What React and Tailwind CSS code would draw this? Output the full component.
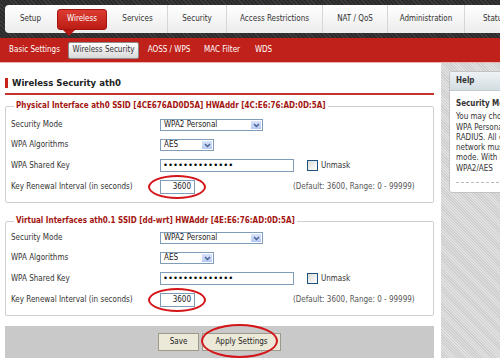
import React from "react";

const tabs = [
  { name: "Setup", w: "w-[51px]" },
  { name: "Wireless", w: "w-[52px]", active: true },
  { name: "Services", w: "w-[59px]" },
  { name: "Security", w: "w-[59px]", sep: true },
  { name: "Access Restrictions", w: "w-[96px]", sep: true },
  { name: "NAT / QoS", w: "w-[65px]", sep: true },
  { name: "Administration", w: "w-[77px]", sep: true },
  { name: "Status", w: "w-[60px]", sep: true },
];

const subTabs = [
  { name: "Basic Settings", w: "w-[59px]" },
  { name: "Wireless Security", w: "w-[71px]", active: true },
  { name: "AOSS / WPS", w: "w-[60px]" },
  { name: "MAC Filter", w: "w-[46px]" },
  { name: "WDS", w: "w-[37px]" },
];

const Chevron = () => (
  <svg width="7" height="5" viewBox="0 0 7 5">
    <path d="M1 1l2.5 2.5L6 1" fill="none" stroke="#4a5f8c" strokeWidth="1.4" />
  </svg>
);

const Select = ({ value, w }) => (
  <div className={`${w} h-[12px] border border-[#7f9db9] bg-white flex items-center`}>
    <span className="flex-1 pl-[3px] text-[#222] leading-none">{value}</span>
    <span className="w-[12px] h-full bg-gradient-to-b from-[#d8e4fc] to-[#b6c9f3] border border-white flex items-center justify-center">
      <Chevron />
    </span>
  </div>
);

const Row = ({ label, h = "h-[20px]", children }) => (
  <div className={`flex items-center ${h}`}>
    <div className="w-[149px] shrink-0 text-[#333] whitespace-nowrap">{label}</div>
    {children}
  </div>
);

const Circle = ({ pos }) => (
  <div className={`absolute ${pos} border-2 border-[#d4161a] rounded-[50%] pointer-events-none`} />
);

const Interface = ({ legend, mt, pt }) => (
  <fieldset className={`${mt} border border-[#cfcfcf] rounded-[2px] pl-[5px] pb-[4px]`}>
    <legend className="ml-[3px] px-[2px] leading-[10px] font-bold text-[#a3150f] whitespace-nowrap">{legend}</legend>
    <div className={pt}>
      <Row label="Security Mode">
        <Select value="WPA2 Personal" w="w-[103px]" />
      </Row>
      <Row label="WPA Algorithms">
        <Select value="AES" w="w-[54px]" />
      </Row>
      <Row label="WPA Shared Key" h="h-[21px]">
        <div className="w-[134px] h-[13px] border border-[#7f9db9] bg-white flex items-center pl-[2px] overflow-hidden">
          <span className="font-['DejaVu_Sans',sans-serif] text-[8.5px] leading-none text-black">••••••••••••••</span>
        </div>
        <div className="ml-[13px] w-[11px] h-[11px] border border-[#1c5180] bg-gradient-to-br from-[#dcdcd6] to-white" />
        <span className="ml-[3px] text-[#333]">Unmask</span>
      </Row>
      <Row label="Key Renewal Interval (in seconds)" h="h-[22px]">
        <div className="relative">
          <div className="w-[35px] h-[14px] border border-[#7f9db9] bg-white flex items-center justify-end pr-[3px] text-[#222]">
            3600
          </div>
          <Circle pos="-left-[12px] -top-[5px] w-[58px] h-[24px]" />
        </div>
        <span className="ml-[98px] text-[#555] whitespace-nowrap">(Default: 3600, Range: 0 - 99999)</span>
      </Row>
    </div>
  </fieldset>
);

export default function App() {
  return (
    <div className="w-[500px] h-[359px] overflow-hidden bg-white text-[8px] font-['DejaVu_Sans_Condensed','Liberation_Sans',sans-serif]">
      {/* top menu */}
      <div className="h-[38px] pt-[5px] pl-[5px] bg-[repeating-linear-gradient(45deg,#3d3d3d_0px,#3d3d3d_1px,#2c2c2c_1px,#2c2c2c_3px)]">
        <div className="h-[28px] rounded-l-[4px] bg-gradient-to-b from-white to-[#ececec] flex">
          {tabs.map((t) => (
            <div
              key={t.name}
              className={`${t.w} shrink-0 h-full flex items-center justify-center text-[#333] whitespace-nowrap ${
                t.sep ? "border-l border-[#d6d6d6]" : ""
              }`}
            >
              {t.active ? (
                <div className="relative w-[50px] h-[21px] rounded-[3px] border border-[#a3140e] bg-gradient-to-b from-[#dc3b31] to-[#bb1b13] text-white flex items-center justify-center">
                  {t.name}
                  <div className="absolute left-[5px] top-[20px] w-0 h-0 border-l-[6px] border-r-[6px] border-t-[6px] border-l-transparent border-r-transparent border-t-[#b8180f]" />
                </div>
              ) : (
                t.name
              )}
            </div>
          ))}
        </div>
      </div>

      {/* sub menu */}
      <div className="h-[25px] bg-[#c0211a] border-b border-[#e9b4b1] flex items-center pl-[5px]">
        {subTabs.map((t) => (
          <div
            key={t.name}
            className={`${t.w} shrink-0 flex items-center justify-center whitespace-nowrap ${
              t.active
                ? "ml-[4px] h-[17px] rounded-[2px] border border-[#8c8c8c] bg-gradient-to-b from-white to-[#d9d9d9] text-[#333]"
                : "text-white"
            }`}
          >
            {t.name}
          </div>
        ))}
      </div>

      <div className="flex h-[295px]">
        {/* main column */}
        <div className="w-[441px] shrink-0 pl-[5px] pr-[7px] flex flex-col">
          <div className="mt-[15px] pb-[5px] border-b-2 border-[#c4342b]">
            <div className="h-[10px] border-l-[3px] border-[#c4221a] pl-[4px] flex items-center text-[9.5px] font-bold text-[#222]">
              Wireless Security ath0
            </div>
          </div>

          <Interface
            mt="mt-[6px]"
            pt="pt-[4px]"
            legend="Physical Interface ath0 SSID [4CE676AD0D5A] HWAddr [4C:E6:76:AD:0D:5A]"
          />
          <Interface
            mt="mt-[13px]"
            pt="pt-[2px]"
            legend="Virtual Interfaces ath0.1 SSID [dd-wrt] HWAddr [4E:E6:76:AD:0D:5A]"
          />

          <div className="mt-auto h-[32px] bg-[#c9c9c9] flex items-center justify-center gap-[3px]">
            <button className="w-[41px] h-[18px] bg-[#ece9d8] border border-[#9d9a8a] text-[#222]">Save</button>
            <div className="relative">
              <button className="w-[79px] h-[18px] bg-[#ece9d8] border border-[#9d9a8a] text-[#222]">
                Apply Settings
              </button>
              <Circle pos="-left-[1px] -top-[9px] w-[77px] h-[34px]" />
            </div>
          </div>
        </div>

        {/* help column */}
        <div className="flex-1 min-w-0 overflow-hidden pt-[8px] pl-[8px] bg-[repeating-linear-gradient(45deg,#cfcfcf_0px,#cfcfcf_1px,#e1e1e1_1px,#e1e1e1_2px)]">
          <div className="w-[90px] h-[122px] bg-white border border-[#c3c3c3] rounded-[3px] overflow-hidden">
            <div className="h-[19px] bg-gradient-to-b from-[#eef3f5] to-[#d3dde2] border-b border-[#c3cbcf] flex items-center pl-[6px] font-bold text-[#333]">
              Help
            </div>
            <div className="pl-[6px] pt-[8px] pr-[4px] whitespace-nowrap text-[#333] leading-[10.3px]">
              <div className="font-bold mb-[3px]">Security Mode:</div>
              <div>You may choose from</div>
              <div>WPA Personal, WPA</div>
              <div>RADIUS. All devices</div>
              <div>network must use</div>
              <div>mode. With N-mode</div>
              <div>WPA2/AES</div>
              <div className="mt-[8px] border-t border-dashed border-[#bbb]" />
            </div>
          </div>
        </div>
      </div>
    </div>
  );
}
